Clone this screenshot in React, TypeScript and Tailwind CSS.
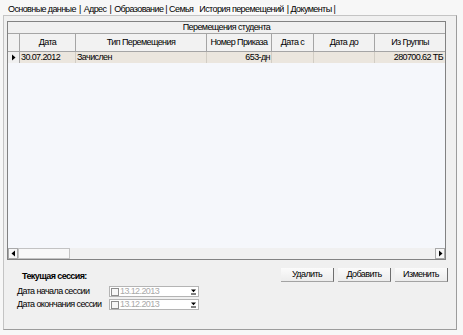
import React from "react"

const cols = "grid grid-cols-[12px_56px_131px_65px_42px_61px_70px]"

function Tri({ dir }: { dir: "left" | "right" }) {
  return (
    <svg width="5" height="7" viewBox="0 0 5 7">
      {dir === "right" ? <polygon points="1,0.5 4.5,3.5 1,6.5" fill="#000" /> : <polygon points="4,0.5 0.5,3.5 4,6.5" fill="#000" />}
    </svg>
  )
}

function DatePicker() {
  return (
    <div className="w-[90px] h-[11px] border border-[#b4b4b4] bg-white flex items-center">
      <div className="w-[8px] h-[8px] ml-[1px] border border-[#8d8d8d] bg-[#f7f7f7]" />
      <span className="ml-[1px] text-[#a9a9a9]">13.12.2013</span>
      <div className="ml-auto mr-[1px] w-[8px] h-[8px] flex items-center justify-center">
        <svg width="7" height="7" viewBox="0 0 7 7">
          <polygon points="1,1.5 6,1.5 3.5,4.2" fill="#000" />
          <line x1="1" y1="6" x2="6" y2="6" stroke="#000" strokeWidth="1" />
        </svg>
      </div>
    </div>
  )
}

function Btn({ label }: { label: string }) {
  return (
    <button className="w-[53px] h-[14px] flex items-center justify-center bg-gradient-to-b from-[#fbfbfb] to-[#ececec] border-b border-r border-b-[#a3a3a3] border-r-[#6f6f6f]">
      {label}
    </button>
  )
}

export default function App() {
  const headers = ["Дата", "Тип Перемещения", "Номер Приказа", "Дата с", "Дата до", "Из Группы"]

  return (
    <div className="w-[463px] h-[335px] overflow-hidden bg-[#f7f7f7] text-black text-[9px] leading-none tracking-[-0.6px] whitespace-nowrap font-['Liberation_Sans',Arial,sans-serif]">
      {/* tab strip */}
      <div className="h-[15px] flex items-center pl-[8px] pt-[3px]">
        <span>Основные данные</span>
        <span className="mx-[3px]">|</span>
        <span>Адрес</span>
        <span className="mx-[3px]">|</span>
        <span>Образование</span>
        <span className="mx-[2px]">|</span>
        <span>Семья</span>
        <span className="ml-[5px] px-[1px] bg-[#fbfbfb]">История перемещений</span>
        <span className="mx-[2px]">|</span>
        <span>Документы</span>
        <span className="ml-[2px]">|</span>
      </div>

      {/* tab page */}
      <div className="ml-[3px] w-[454px] h-[315px] border border-[#c4c4c4] border-r-[#9c9c9c] border-b-[#9c9c9c] bg-[#f0f0f0] flex flex-col">
        {/* grid */}
        <div className="mt-[5px] ml-[3px] w-[439px] h-[239px] border border-[#828282] bg-[#f5f7fb] flex flex-col">
          <div className="h-[12px] shrink-0 border-b border-[#a5a5a5] bg-[#f0f0f0] flex items-center justify-center">
            Перемещения студента
          </div>
          <div className={`${cols} h-[18px] shrink-0 border-b border-[#a5a5a5] bg-[#f2f2f2]`}>
            <div className="border-r border-[#a5a5a5]" />
            {headers.map((h, i) => (
              <div key={h} className={`flex items-center justify-center ${i < headers.length - 1 ? "border-r border-[#a5a5a5]" : ""}`}>
                {h}
              </div>
            ))}
          </div>
          <div className={`${cols} h-[11px] shrink-0 bg-[#ebe6de]`}>
            <div className="bg-[#f0f0f0] border-r border-[#a5a5a5] flex items-center justify-center">
              <Tri dir="right" />
            </div>
            <div className="border-r border-[#d2cdc4] flex items-center pl-[1px]">30.07.2012</div>
            <div className="border-r border-[#d2cdc4] flex items-center pl-[1px]">Зачислен</div>
            <div className="border-r border-[#d2cdc4] flex items-center justify-end pr-[1px]">653-дн</div>
            <div className="border-r border-[#d2cdc4]" />
            <div className="border-r border-[#d2cdc4]" />
            <div className="flex items-center justify-end pr-[2px]">280700.62 ТБ</div>
          </div>
          <div className="flex-1" />
          {/* horizontal scrollbar */}
          <div className="h-[11px] shrink-0 flex bg-[#f0f0f0]">
            <div className="w-[10px] border border-[#a9a9a9] bg-[#f7f7f7] flex items-center justify-center">
              <Tri dir="left" />
            </div>
            <div className="w-[52px] border border-[#c3c3c3] bg-[#f8f8f8]" />
            <div className="flex-1" />
            <div className="w-[10px] border border-[#a9a9a9] bg-[#f7f7f7] flex items-center justify-center">
              <Tri dir="right" />
            </div>
          </div>
        </div>

        {/* bottom area */}
        <div className="flex justify-between">
          <div className="pl-[13px] pt-[11px] flex flex-col">
            <div className="h-[11px] ml-[5px] flex items-center font-bold">Текущая сессия:</div>
            <div className="mt-[4px] h-[11px] flex items-center">
              <span className="w-[92px]">Дата начала сессии</span>
              <DatePicker />
            </div>
            <div className="mt-[2px] h-[11px] flex items-center">
              <span className="w-[92px]">Дата окончания сессии</span>
              <DatePicker />
            </div>
          </div>
          <div className="pr-[8px] pt-[8px] flex gap-[4px] items-start">
            <Btn label="Удалить" />
            <Btn label="Добавить" />
            <Btn label="Изменить" />
          </div>
        </div>
      </div>
    </div>
  )
}
